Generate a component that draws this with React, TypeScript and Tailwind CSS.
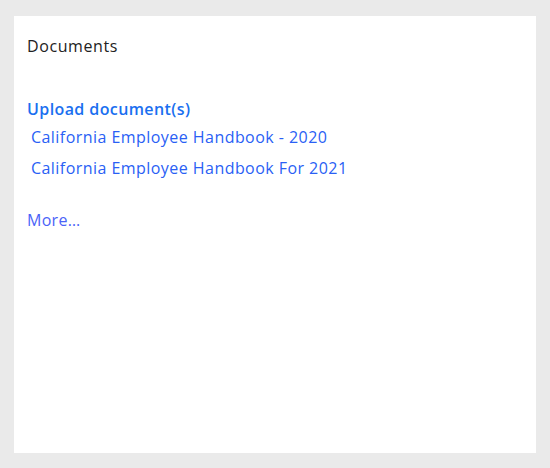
const docs = ["California Employee Handbook - 2020", "California Employee Handbook For 2021"]

export default function App() {
  return (
    <div className="w-[550px] h-[468px] bg-[#eaeaea] pt-4 pl-[14px]" style={{ fontFamily: '"Open Sans", sans-serif' }}>
      <div className="w-[522px] h-[437px] bg-white px-[13px] pt-[20px]">
        {/* Header */}
        <h2 className="text-[16px] leading-[20px] font-medium tracking-[0.6px] text-[#222]">Documents</h2>

        {/* Upload + list */}
        <div className="mt-[43px]">
          <a className="block text-[16px] leading-[20px] font-semibold tracking-[0.4px] text-[#1a6ff0]">Upload document(s)</a>
          <ul className="mt-[8px] pl-1 flex flex-col gap-[11px]">
            {docs.map((d) => (
              <li key={d} className="text-[16px] leading-[20px] tracking-[0.45px] text-[#2a5ff5]">{d}</li>
            ))}
          </ul>
        </div>

        <a className="block mt-[32px] text-[16px] leading-[20px] tracking-[0.3px] text-[#4a63f8]">More…</a>
      </div>
    </div>
  )
}
